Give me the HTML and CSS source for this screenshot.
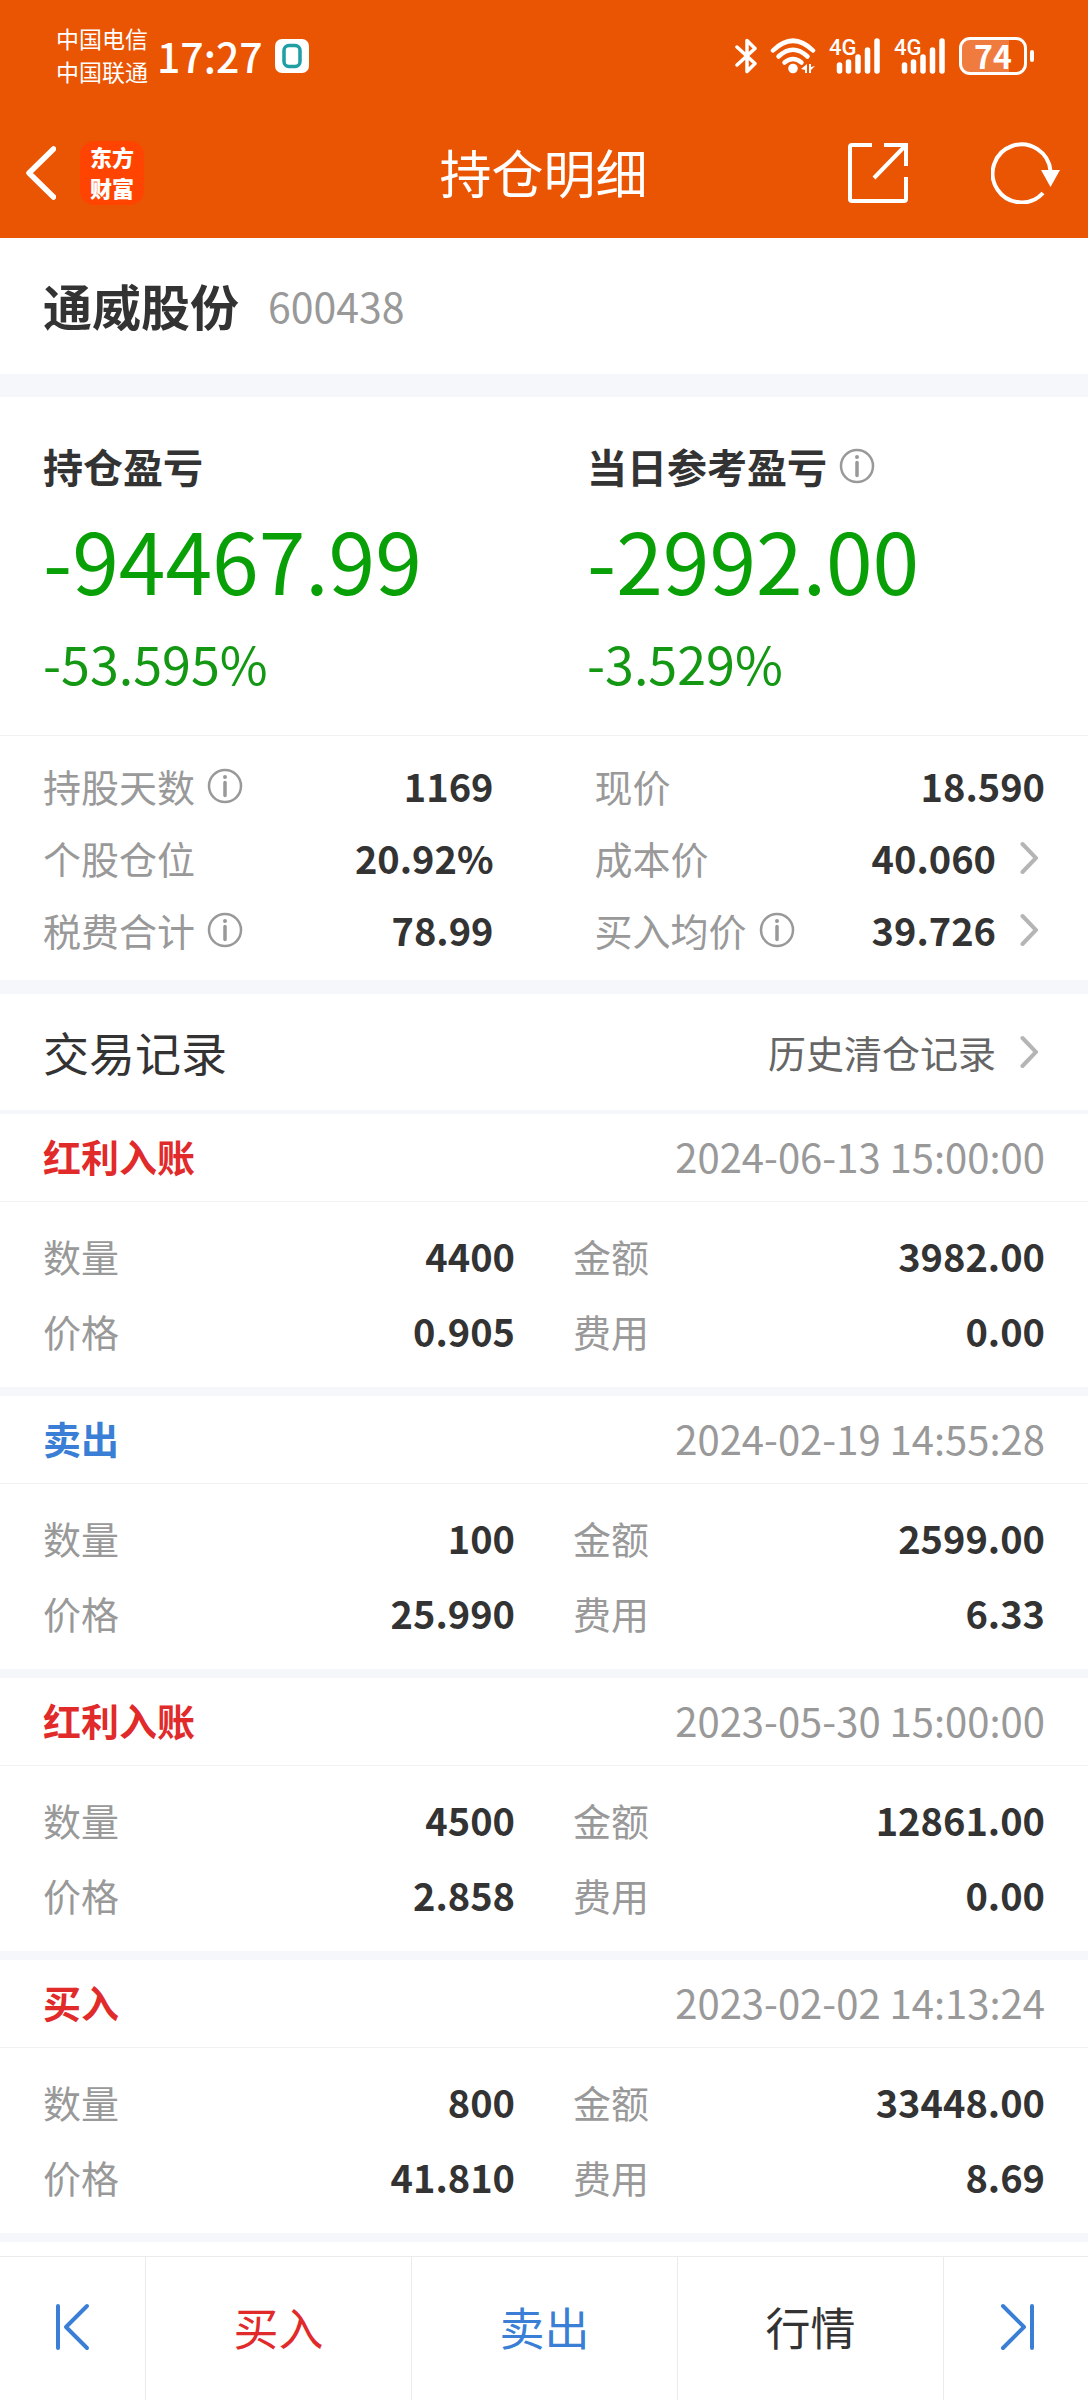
FILE: index.html
```html
<!DOCTYPE html>
<html lang="zh-CN">
<head>
    <meta charset="UTF-8">
    <meta name="viewport" content="width=device-width, initial-scale=1.0">
    <title>持仓明细</title>
    <link rel="stylesheet" href="styles.css">
</head>
<body>
    <!-- Shared icons -->
    <svg width="0" height="0" class="sprite" aria-hidden="true">
        <symbol id="icon-info" viewBox="0 0 36 36">
            <circle cx="18" cy="18" r="16" fill="none" stroke="currentColor" stroke-width="2.500"/>
            <circle cx="18" cy="9" r="2"/>
            <path d="M18 14.5v13" stroke="currentColor" stroke-width="3.500" stroke-linecap="round"/>
        </symbol>
        <symbol id="icon-chevron" viewBox="0 0 18 34">
            <path d="M2.5 3L16 17 2.5 31" fill="none" stroke="currentColor" stroke-width="4" stroke-linecap="round"/>
        </symbol>
        <symbol id="icon-signal" viewBox="0 0 52 38">
            <path d="M10.5 28v6M19.500 25v9M29 20v14M38.500 13v21M48 4v30" stroke="currentColor" stroke-width="5.500" stroke-linecap="round"/>
        </symbol>
    </svg>

    <header class="header">
        <div class="status-bar">
            <div class="carriers">
                <div>中国电信</div>
                <div>中国联通</div>
            </div>
            <div class="time">17:27</div>
            <svg class="badge" viewBox="0 0 34 34">
                <rect width="34" height="34" rx="7" fill="#fff"/>
                <rect x="9" y="6.500" width="16" height="21" rx="5" fill="none" stroke="#1d9fa3" stroke-width="3.500"/>
            </svg>
            <div class="status-icons">
                <svg width="22" height="38" viewBox="0 0 22 38">
                    <path d="M2 10L20 26.500 12 34.500V3.500L20 11.500 2 28" fill="none" stroke="currentColor" stroke-width="3.500" stroke-linecap="round" stroke-linejoin="round"/>
                </svg>
                <svg class="wifi" width="46" height="38" viewBox="0 0 46 38">
                    <g fill="none" stroke="currentColor" stroke-width="4.500" stroke-linecap="round">
                        <path d="M3 13.500Q23-6 43 13.500"/>
                        <path d="M8.500 19.500Q23 6 37.500 19.500"/>
                        <path d="M14.500 25.500Q23 18.500 31.500 25.500"/>
                    </g>
                    <circle cx="23" cy="31.500" r="4.800"/>
                    <path d="M37 27v9h-2v-3l-4-1zM39 27v9h2v-3l4-4-4 1v-3z"/>
                </svg>
                <div class="signal">
                    <svg width="52" height="38"><use href="#icon-signal"/></svg>
                    <span>4G</span>
                </div>
                <div class="signal">
                    <svg width="52" height="38"><use href="#icon-signal"/></svg>
                    <span>4G</span>
                </div>
                <div class="battery"><span>74</span></div>
            </div>
        </div>

        <nav class="nav-bar">
            <div class="nav-left">
                <button class="icon-btn" aria-label="返回">
                    <svg width="30" height="54" viewBox="0 0 30 54">
                        <path d="M27.500 3L3 27 27.500 51" fill="none" stroke="currentColor" stroke-width="5.500" stroke-linecap="round" stroke-linejoin="round"/>
                    </svg>
                </button>
                <a class="logo" href="#">东方<br>财富</a>
            </div>
            <h1 class="title">持仓明细</h1>
            <div class="nav-right">
                <button class="icon-btn" aria-label="分享">
                    <svg width="62" height="62" viewBox="0 0 62 62">
                        <path d="M25 3H5Q3 3 3 5V57Q3 59 5 59H57Q59 59 59 57V35M37 3H59V24M59 3L27 36" fill="none" stroke="currentColor" stroke-width="4"/>
                    </svg>
                </button>
                <button class="icon-btn" aria-label="刷新">
                    <svg width="70" height="62" viewBox="0 0 70 62">
                        <path d="M52 51A29 29 0 1 1 59.500 29" fill="none" stroke="currentColor" stroke-width="4"/>
                        <path d="M50 28h19l-9.500 17z"/>
                    </svg>
                </button>
            </div>
        </nav>
    </header>

    <main>
        <section class="stock">
            <h2>通威股份</h2>
            <span class="code">600438</span>
        </section>

        <section class="profit">
            <div>
                <h3>持仓盈亏</h3>
                <div class="amount">-94467.99</div>
                <div class="percent">-53.595%</div>
            </div>
            <div>
                <h3>当日参考盈亏 <button class="info" aria-label="说明"><svg><use href="#icon-info"/></svg></button></h3>
                <div class="amount">-2992.00</div>
                <div class="percent">-3.529%</div>
            </div>
        </section>

        <section class="stats">
            <div class="row">
                <span class="label">持股天数</span>
                <button class="info" aria-label="说明"><svg><use href="#icon-info"/></svg></button>
                <span class="value">1169</span>
            </div>
            <div class="row">
                <span class="label">现价</span>
                <span class="value">18.590</span>
            </div>
            <div class="row">
                <span class="label">个股仓位</span>
                <span class="value">20.92%</span>
            </div>
            <div class="row">
                <span class="label">成本价</span>
                <span class="value">40.060</span>
                <svg class="chevron"><use href="#icon-chevron"/></svg>
            </div>
            <div class="row">
                <span class="label">税费合计</span>
                <button class="info" aria-label="说明"><svg><use href="#icon-info"/></svg></button>
                <span class="value">78.99</span>
            </div>
            <div class="row">
                <span class="label">买入均价</span>
                <button class="info" aria-label="说明"><svg><use href="#icon-info"/></svg></button>
                <span class="value">39.726</span>
                <svg class="chevron"><use href="#icon-chevron"/></svg>
            </div>
        </section>

        <section class="records-head">
            <h2>交易记录</h2>
            <a href="#">历史清仓记录<svg class="chevron"><use href="#icon-chevron"/></svg></a>
        </section>

        <article class="record">
            <header>
                <h3 class="red">红利入账</h3>
                <time>2024-06-13 15:00:00</time>
            </header>
            <div class="record-body">
                <div class="row"><span class="label">数量</span><span class="value">4400</span></div>
                <div class="row"><span class="label">金额</span><span class="value">3982.00</span></div>
                <div class="row"><span class="label">价格</span><span class="value">0.905</span></div>
                <div class="row"><span class="label">费用</span><span class="value">0.00</span></div>
            </div>
        </article>

        <article class="record">
            <header>
                <h3 class="blue">卖出</h3>
                <time>2024-02-19 14:55:28</time>
            </header>
            <div class="record-body">
                <div class="row"><span class="label">数量</span><span class="value">100</span></div>
                <div class="row"><span class="label">金额</span><span class="value">2599.00</span></div>
                <div class="row"><span class="label">价格</span><span class="value">25.990</span></div>
                <div class="row"><span class="label">费用</span><span class="value">6.33</span></div>
            </div>
        </article>

        <article class="record">
            <header>
                <h3 class="red">红利入账</h3>
                <time>2023-05-30 15:00:00</time>
            </header>
            <div class="record-body">
                <div class="row"><span class="label">数量</span><span class="value">4500</span></div>
                <div class="row"><span class="label">金额</span><span class="value">12861.00</span></div>
                <div class="row"><span class="label">价格</span><span class="value">2.858</span></div>
                <div class="row"><span class="label">费用</span><span class="value">0.00</span></div>
            </div>
        </article>

        <article class="record">
            <header>
                <h3 class="red">买入</h3>
                <time>2023-02-02 14:13:24</time>
            </header>
            <div class="record-body">
                <div class="row"><span class="label">数量</span><span class="value">800</span></div>
                <div class="row"><span class="label">金额</span><span class="value">33448.00</span></div>
                <div class="row"><span class="label">价格</span><span class="value">41.810</span></div>
                <div class="row"><span class="label">费用</span><span class="value">8.69</span></div>
            </div>
        </article>
    </main>

    <footer class="tab-bar">
        <button class="blue" aria-label="上一只">
            <svg width="38" height="48" viewBox="0 0 38 48">
                <path d="M4 3v42M33 3L12 24 33 45" fill="none" stroke="currentColor" stroke-width="4" stroke-linecap="round" stroke-linejoin="round"/>
            </svg>
        </button>
        <button class="red">买入</button>
        <button class="blue">卖出</button>
        <button>行情</button>
        <button class="blue" aria-label="下一只">
            <svg width="38" height="48" viewBox="0 0 38 48">
                <path d="M35 3v42M6 3L27 24 6 45" fill="none" stroke="currentColor" stroke-width="4" stroke-linecap="round" stroke-linejoin="round"/>
            </svg>
        </button>
    </footer>
</body>
</html>
```
FILE: styles.css
```css
* {
    margin: 0;
    padding: 0;
    box-sizing: border-box;
}

body {
    font-family: 'Noto Sans CJK SC', 'Noto Sans', sans-serif;
    font-size: 38px;
    line-height: 60px;
    color: #333;
    background: #fff;
    padding-bottom: 144px;
}

button {
    font: inherit;
    color: inherit;
    background: none;
    border: none;
    cursor: pointer;
}

a {
    color: inherit;
    text-decoration: none;
}

svg {
    display: block;
    fill: currentColor;
}

.sprite {
    position: absolute;
}

.red {
    color: #e12a2a;
}

.blue {
    color: #3a7fd5;
}

/* Header */
.header {
    background: #ea5504;
    color: #fff;
}

.status-bar {
    display: flex;
    align-items: center;
    height: 108px;
    padding: 4px 54px 0 56px;
}

.carriers {
    padding-bottom: 2px;
    font-size: 23px;
    line-height: 33px;
}

.time {
    margin-left: 9px;
    padding-bottom: 2px;
    font-size: 41px;
    font-weight: 500;
}

.badge {
    width: 34px;
    height: 34px;
    margin-left: 12px;
}

.status-icons {
    display: flex;
    align-items: center;
    gap: 13px;
    margin-left: auto;
}

.signal {
    position: relative;
}

.signal span {
    position: absolute;
    top: 0;
    left: 0;
    font-family: Roboto, sans-serif;
    font-size: 22px;
    font-weight: 500;
    line-height: 22px;
}

.battery {
    position: relative;
    width: 68px;
    height: 38px;
    margin-right: 7px;
    border: 3px solid #fff;
    border-radius: 11px;
    background: linear-gradient(to right, #f07b3e 76%, transparent 76%);
    font-size: 32px;
    font-weight: 700;
    line-height: 30px;
    text-align: center;
}

.battery::after {
    content: '';
    position: absolute;
    top: 10px;
    right: -10px;
    width: 4px;
    height: 12px;
    border-radius: 2px;
    background: #fff;
}

.nav-bar {
    display: grid;
    grid-template-columns: 1fr auto 1fr;
    align-items: center;
    height: 130px;
    padding: 0 27px 0 26px;
}

.nav-left,
.nav-right {
    display: flex;
    align-items: center;
}

.nav-left {
    gap: 24px;
}

.nav-right {
    justify-content: flex-end;
    gap: 82px;
}

.logo {
    width: 64px;
    height: 64px;
    border-radius: 14px;
    background: #ff4402;
    font-size: 22px;
    font-weight: 900;
    line-height: 31px;
    text-align: center;
}

.title {
    padding-bottom: 2px;
    font-size: 52px;
    font-weight: 400;
}

/* Stock name */
.stock {
    display: flex;
    align-items: center;
    gap: 29px;
    height: 159px;
    padding: 0 44px 2px 43px;
    border-bottom: 23px solid #f6f7fa;
}

.stock h2 {
    font-size: 49px;
}

.code {
    font-size: 41px;
    color: #999;
}

/* Profit and loss */
.profit {
    display: grid;
    grid-template-columns: 1fr 1fr;
    padding: 39px 0 42px;
    border-bottom: 1px solid #f2f2f2;
}

.profit > div {
    padding-left: 43px;
}

.profit h3 {
    display: flex;
    align-items: center;
    gap: 12px;
    font-size: 40px;
}

.amount {
    margin-top: 13px;
    font-size: 84px;
    line-height: 100px;
    color: #09a007;
}

.percent {
    margin-top: 24px;
    font-size: 52px;
    color: #149814;
}

.info {
    color: #999;
}

.info svg {
    width: 36px;
    height: 36px;
}

.chevron {
    width: 18px;
    height: 34px;
    margin-left: 24px;
    margin-right: 7px;
    color: #b5b5b5;
}

/* Position stats */
.stats {
    display: grid;
    grid-template-columns: 1fr 1fr;
    column-gap: 101px;
    padding: 14px 43px;
}

.row {
    display: flex;
    align-items: center;
    height: 72px;
}

.row .info {
    margin-left: 12px;
}

.label {
    color: #999;
}

.value {
    margin-left: auto;
    font-weight: 700;
}

/* Trade records */
.records-head {
    display: flex;
    align-items: center;
    justify-content: space-between;
    height: 134px;
    padding: 0 43px;
    border-top: 14px solid #f6f7fa;
    border-bottom: 4px solid #f6f7fa;
}

.records-head h2 {
    padding-bottom: 2px;
    font-size: 46px;
    font-weight: 400;
}

.records-head a {
    display: flex;
    align-items: center;
    color: #666;
}

.record {
    border-bottom: 9px solid #f6f7fa;
}

.record header {
    display: flex;
    align-items: center;
    justify-content: space-between;
    height: 88px;
    padding: 0 43px 3px;
    border-bottom: 1px solid #f2f2f2;
}

.record h3 {
    font-size: 38px;
}

.record time {
    font-size: 40px;
    color: #999;
}

.record-body {
    display: grid;
    grid-template-columns: 1fr 1fr;
    column-gap: 58px;
    padding: 16px 43px 19px;
}

.record-body .row {
    height: 75px;
}

/* Bottom bar */
.tab-bar {
    position: fixed;
    left: 0;
    right: 0;
    bottom: 0;
    display: grid;
    grid-template-columns: 145px 1fr 1fr 1fr 145px;
    height: 144px;
    border-top: 1px solid #ebebeb;
    background: #fff;
    font-size: 45px;
}

.tab-bar button {
    padding-bottom: 3px;
}

.tab-bar button + button {
    border-left: 1px solid #ebebeb;
}

.tab-bar svg {
    margin: 0 auto;
}
```
